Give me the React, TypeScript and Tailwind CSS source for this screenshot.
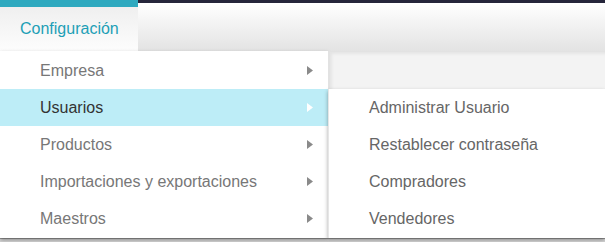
const items = [
  "Empresa",
  "Usuarios",
  "Productos",
  "Importaciones y exportaciones",
  "Maestros",
];

const subItems = [
  "Administrar Usuario",
  "Restablecer contraseña",
  "Compradores",
  "Vendedores",
];

function Arrow({ active }: { active: boolean }) {
  return (
    <svg width="6" height="9" viewBox="0 0 6 9" className="shrink-0">
      <path d="M0 0 L6 4.5 L0 9 Z" fill={active ? "#ffffff" : "#8a8a8a"} />
    </svg>
  );
}

export default function App() {
  return (
    <div className="relative w-[605px] h-[242px] overflow-hidden bg-white font-['Liberation_Sans',Arial,sans-serif]">
      {/* Barra superior */}
      <div className="flex h-[51px]">
        <div className="flex flex-col w-[138px]">
          <div className="h-[7px] bg-[#2ea9bf]" />
          <div className="flex-1 flex items-center pl-[20px] bg-gradient-to-b from-[#efefef] to-[#fdfdfd] text-[#1d9fb6] text-[16px]">
            Configuración
          </div>
        </div>
        <div className="flex-1 flex flex-col">
          <div className="h-[3px] bg-[#25253a]" />
          <div className="flex-1 bg-gradient-to-b from-[#ffffff] to-[#e3e3e3]" />
        </div>
      </div>

      {/* Contenido de fondo (tabla tapada por el menú) */}
      <div className="mt-[187px] h-[4px] border-t border-[#9a9a9a] bg-[#d6d6d6]" />

      {/* Menú desplegable */}
      <div className="absolute left-0 top-[51px] w-[328px] pt-[1px] pb-[1px] bg-white shadow-[0_2px_4px_rgba(0,0,0,0.35)]">
        {items.map((item) => {
          const active = item === "Usuarios";
          return (
            <div
              key={item}
              className={`flex items-center justify-between h-[37px] pl-[40px] pr-[15px] text-[16px] ${
                active ? "bg-[#bdedf7] text-[#333]" : "text-[#777]"
              }`}
            >
              <span>{item}</span>
              <Arrow active={active} />
            </div>
          );
        })}
      </div>

      {/* Submenú */}
      <div className="absolute left-[328px] top-[51px] right-0 flex flex-col">
        <div className="h-[38px] bg-[#f3f3f3] border-l-[2px] border-t border-[#e2e2e2] shadow-[inset_2px_2px_3px_rgba(0,0,0,0.06)]" />
        <div className="pb-[1px] bg-white shadow-[0_2px_4px_rgba(0,0,0,0.35)] border-l border-[#e6e6e6]">
          {subItems.map((s) => (
            <div
              key={s}
              className="flex items-center h-[37px] pl-[40px] text-[16px] text-[#666]"
            >
              {s}
            </div>
          ))}
        </div>
      </div>
    </div>
  );
}
